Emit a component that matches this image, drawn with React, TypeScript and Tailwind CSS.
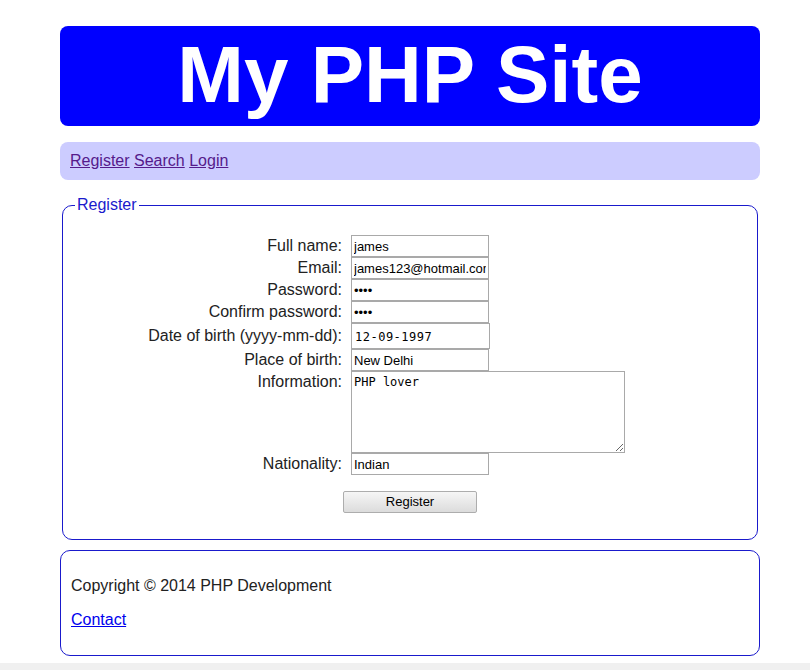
const rows = [
    { label: 'Full name:', value: 'james', type: 'text' },
    { label: 'Email:', value: 'james123@hotmail.com', type: 'text' },
    { label: 'Password:', value: '1234', type: 'password' },
    { label: 'Confirm password:', value: '1234', type: 'password' },
];

const inputCls = "w-[138px] h-[22px] border border-[#a9a9a9] px-[2px] text-[13px] text-black bg-white outline-none";

const App = () => {
    return (
        <div className="min-h-[670px] bg-white flex flex-col font-['Liberation_Sans',Arial,sans-serif] text-[16px] text-[#222]">
            <div className="w-[700px] mx-[60px] pt-[26px] grow">
                <header className="h-[100px] bg-[#0000ff] rounded-[8px] flex items-center justify-center">
                    <h1 className="text-white font-bold text-[80px] leading-none pb-[2px]">My PHP Site</h1>
                </header>

                <nav className="mt-[16px] bg-[#ccccff] rounded-[8px] px-[10px] py-[10px] leading-[18px]">
                    <a href="#" className="underline text-[#551a8b]">Register</a>{' '}
                    <a href="#" className="underline text-[#551a8b]">Search</a>{' '}
                    <a href="#" className="underline text-[#551a8b]">Login</a>
                </nav>

                <fieldset className="mt-[16px] mx-[2px] border border-[#1a1acc] rounded-[10px] px-[12px] pt-[21px] pb-[26px]">
                    <legend className="px-[2px] text-[#1a1acc] leading-[18px]">Register</legend>
                    <div className="grid grid-cols-[267px_auto] gap-x-[9px] items-center">
                        {rows.map((r) => (
                            <div key={r.label} className="contents">
                                <label className="text-right leading-[18px]">{r.label}</label>
                                <input type={r.type} defaultValue={r.value} className={inputCls} />
                            </div>
                        ))}
                        <label className="text-right leading-[18px]">Date of birth (yyyy-mm-dd):</label>
                        <input type="text" defaultValue="12-09-1997" className="w-[139px] h-[26px] border border-[#a9a9a9] px-[3px] pt-[2px] text-[12px] tracking-[0.5px] text-black font-['DejaVu_Sans_Mono',monospace] outline-none" />
                        <label className="text-right leading-[18px]">Place of birth:</label>
                        <input type="text" defaultValue="New Delhi" className={inputCls} />
                        <label className="text-right leading-[18px] self-start pt-[2px]">Information:</label>
                        <textarea defaultValue="PHP lover" className="w-[274px] h-[82px] border border-[#a9a9a9] px-[2px] py-[1px] text-[12px] text-black font-['DejaVu_Sans_Mono',monospace] outline-none" />
                        <label className="text-right leading-[18px]">Nationality:</label>
                        <input type="text" defaultValue="Indian" className={inputCls} />
                    </div>
                    <div className="flex justify-center mt-[16px]">
                        <button className="w-[134px] h-[22px] border border-[#adadad] rounded-[2px] bg-gradient-to-b from-[#f6f6f6] to-[#dcdcdc] text-[13px] text-black">
                            Register
                        </button>
                    </div>
                </fieldset>

                <footer className="mt-[10px] border border-[#1a1acc] rounded-[10px] px-[10px] py-[10px] leading-[18px]">
                    <p className="my-[16px]">Copyright © 2014 PHP Development</p>
                    <p className="my-[16px]">
                        <a href="#" className="underline text-[#0000ee]">Contact</a>
                    </p>
                </footer>
            </div>
            <div className="h-[7px] bg-[#f0f0f0] mt-[5px]"></div>
        </div>
    );
}

export default App;
